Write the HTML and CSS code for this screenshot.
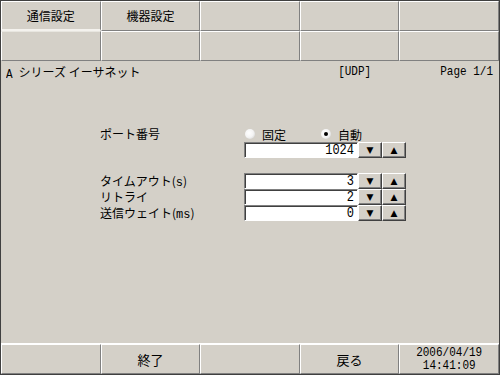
FILE: index.html
```html
<!DOCTYPE html>
<html lang="ja">
<head>
<meta charset="utf-8">
<link rel="stylesheet" href="styles.css">
</head>
<body>
<div class="screen">
  <div class="tabs">
    <div class="cell tab-active">通信設定</div>
    <div class="cell">機器設定</div>
    <div class="cell"></div>
    <div class="cell"></div>
    <div class="cell"></div>
    <div class="cell tab-under"></div>
    <div class="cell"></div>
    <div class="cell"></div>
    <div class="cell"></div>
    <div class="cell"></div>
  </div>
  <div class="header">
    <span class="title"><span class="mono tall first">A</span>シリーズ イーサネット</span>
    <span class="proto mono tall">[UDP]</span>
    <span class="page mono tall">Page 1/1</span>
  </div>
  <div class="main">
    <div class="form">
      <div class="label">ポート番号</div>
      <div class="radios">
        <span class="radio"></span><span class="rlabel">固定</span>
        <span class="radio checked"></span><span class="rlabel">自動</span>
      </div>
      <div class="label"></div>
      <div class="spin">
        <div class="field mono"><span class="tall">1024</span></div>
        <div class="btn">&#9660;</div>
        <div class="btn">&#9650;</div>
      </div>
      <div class="gap"></div>
      <div class="gap"></div>
      <div class="label">タイムアウト(<span class="mono">s</span>)</div>
      <div class="spin">
        <div class="field mono"><span class="tall">3</span></div>
        <div class="btn">&#9660;</div>
        <div class="btn">&#9650;</div>
      </div>
      <div class="label">リトライ</div>
      <div class="spin">
        <div class="field mono"><span class="tall">2</span></div>
        <div class="btn">&#9660;</div>
        <div class="btn">&#9650;</div>
      </div>
      <div class="label">送信ウェイト(<span class="mono">ms</span>)</div>
      <div class="spin">
        <div class="field mono"><span class="tall">0</span></div>
        <div class="btn">&#9660;</div>
        <div class="btn">&#9650;</div>
      </div>
    </div>
  </div>
  <div class="footer">
    <div class="cell"></div>
    <div class="cell">終了</div>
    <div class="cell"></div>
    <div class="cell">戻る</div>
    <div class="cell date mono"><span class="tall">2006/04/19</span><span class="tall">14:41:09</span></div>
  </div>
</div>
</body>
</html>
```

FILE: styles.css
```css
* { box-sizing: border-box; }
html, body { margin: 0; padding: 0; }
body {
  width: 500px;
  height: 375px;
  overflow: hidden;
  font-family: "Noto Sans CJK JP", "DejaVu Sans", sans-serif;
  font-size: 12px;
  color: #000;
  background: #d4d0c8;
}
.mono { font-family: "Liberation Mono", "DejaVu Sans Mono", monospace; }
.tall { display: inline-block; transform: scaleY(1.2); }
.screen {
  width: 500px;
  height: 375px;
  border: 1px solid #404040;
  display: flex;
  flex-direction: column;
  background: #d4d0c8;
}
.tabs {
  display: grid;
  grid-template-columns: repeat(5, 1fr);
  grid-template-rows: 30px 30px;
}
.cell {
  border-top: 1px solid #ffffff;
  border-left: 1px solid #ffffff;
  border-right: 1px solid #808080;
  border-bottom: 1px solid #808080;
  box-shadow: inset -1px -1px 0 #d4d0c8;
  display: flex;
  align-items: center;
  justify-content: center;
  font-size: 12px;
  line-height: 1;
}
.tab-active { border-bottom: 2px solid #f4f2ee; }
.tab-under { border-top: 1px solid #e8e6e0; }
.header {
  height: 20px;
  display: flex;
  align-items: center;
  padding: 0 6px 0 5px;
  font-size: 12px;
}
.title { flex: 1; }
.first { margin-right: 6px; font-size: 11px; }
.proto { margin-right: 69px; font-size: 11px; }
.page { font-size: 11px; }
.main { flex: 1; }
.form {
  margin-top: 45px;
  margin-left: 99px;
  display: grid;
  grid-template-columns: 144px auto;
  grid-auto-rows: auto;
  align-items: center;
}
.label { height: 16px; line-height: 15px; }
.gap { height: 15px; }
.radios {
  height: 16px;
  display: flex;
  align-items: center;
}
.radio {
  width: 10px;
  height: 10px;
  border-radius: 50%;
  background: radial-gradient(circle at 40% 40%, #ffffff 0%, #f4f4f4 50%, #c8c8c8 100%);
  margin-left: 1px;
  margin-right: 7px;
  position: relative;
}
.radio.checked::after {
  content: "";
  position: absolute;
  left: 3px;
  top: 3px;
  width: 4px;
  height: 4px;
  border-radius: 50%;
  background: #000;
}
.rlabel { width: 58px; }
.spin {
  display: flex;
  height: 16px;
}
.field {
  width: 114px;
  height: 16px;
  background: #fff;
  border-top: 1px solid #808080;
  border-left: 1px solid #808080;
  border-bottom: 1px solid #ffffff;
  border-right: 1px solid #ffffff;
  box-shadow: inset 1px 1px 0 #404040;
  text-align: right;
  padding-right: 3px;
  font-size: 12px;
  line-height: 14px;
}
.btn {
  width: 24px;
  height: 16px;
  background: #d4d0c8;
  border-top: 1px solid #ffffff;
  border-left: 1px solid #ffffff;
  border-right: 1px solid #404040;
  border-bottom: 1px solid #404040;
  box-shadow: inset -1px -1px 0 #808080;
  font-size: 9px;
  line-height: 14px;
  text-align: center;
  font-family: "DejaVu Sans", sans-serif;
}
.footer {
  margin-top: auto;
  display: grid;
  grid-template-columns: repeat(5, 1fr);
  height: 31px;
  border-top: 1px solid #ffffff;
}
.footer .cell { font-size: 13px; }
.date {
  flex-direction: column;
}
.footer .date {
  font-size: 11px;
  line-height: 13px;
}
```
